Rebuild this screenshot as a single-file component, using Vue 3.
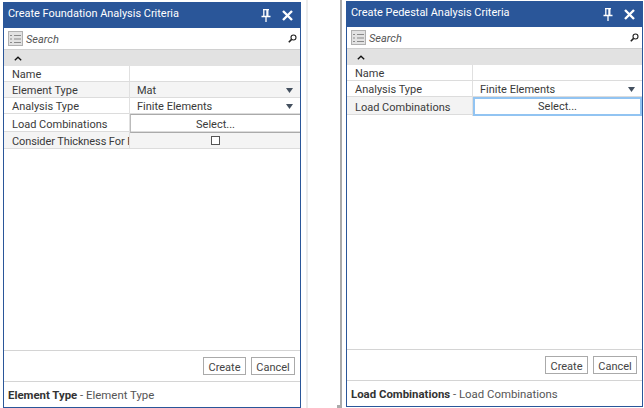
<script setup>
const panels = [
  {
    id: 'left',
    title: 'Create Foundation Analysis Criteria',
    rows: [
      { label: 'Name', type: 'text', value: '' },
      { label: 'Element Type', type: 'combo', value: 'Mat', alt: true },
      { label: 'Analysis Type', type: 'combo', value: 'Finite Elements' },
      { label: 'Load Combinations', type: 'button', value: 'Select...' },
      { label: 'Consider Thickness For Rigidity', type: 'check', value: '', alt: true }
    ],
    hint: 'Element Type'
  },
  {
    id: 'right',
    title: 'Create Pedestal Analysis Criteria',
    rows: [
      { label: 'Name', type: 'text', value: '' },
      { label: 'Analysis Type', type: 'combo', value: 'Finite Elements' },
      { label: 'Load Combinations', type: 'button', value: 'Select...', focus: true }
    ],
    hint: 'Load Combinations'
  }
]
</script>

<template>
  <div class="desk">
    <i class="strip-light"></i>
    <i class="strip-dark"></i>
    <i class="strip-foot"></i>
    <section v-for="p in panels" :key="p.id" class="panel" :class="p.id">
      <header class="title">
        <span class="title-text">{{ p.title }}</span>
        <svg class="pin" width="10" height="13" viewBox="0 0 10 13">
          <path d="M2 .7h6M2.8 1v6M6.8 1v6M.5 7.5h9M5 8v5" fill="none" stroke="#fff" stroke-width="1.3" />
          <path d="M6 1v6" stroke="#fff" stroke-width="1.4" />
        </svg>
        <svg class="close" width="11" height="11" viewBox="0 0 11 11">
          <path d="M1 1l9 9M10 1l-9 9" stroke="#fff" stroke-width="2.4" fill="none" />
        </svg>
      </header>
      <div class="search">
        <span class="list-btn">
          <svg width="11" height="10" viewBox="0 0 11 10">
            <path d="M0 1.5h2M4 1.5h7M0 5h2M4 5h7M0 8.5h2M4 8.5h7" stroke="#8a8a8a" stroke-width="1.1" fill="none" />
          </svg>
        </span>
        <span class="search-text">Search</span>
        <svg class="glass" width="9" height="9" viewBox="0 0 9 9">
          <circle cx="5.5" cy="3.5" r="2.5" fill="none" stroke="#222" stroke-width="1.1" />
          <path d="M3.6 5.4L.8 8.2" stroke="#222" stroke-width="1.6" />
        </svg>
      </div>
      <div class="group">
        <svg width="8" height="5" viewBox="0 0 8 5"><path d="M.8 4.2L4 1.2l3.2 3" fill="none" stroke="#111" stroke-width="1.3" /></svg>
      </div>
      <div class="grid">
        <div v-for="r in p.rows" :key="r.label" class="row" :class="[r.type, { alt: r.alt, focus: r.focus }]">
          <span class="label">{{ r.label }}</span>
          <span class="value">
            <template v-if="r.type === 'combo'">
              <span class="combo-text">{{ r.value }}</span>
              <svg class="arrow" width="7" height="5" viewBox="0 0 7 5"><path d="M0 0h7L3.5 5z" fill="#44505f" /></svg>
            </template>
            <template v-else-if="r.type === 'button'"><span class="select">{{ r.value }}</span></template>
            <span v-else-if="r.type === 'check'" class="box"></span>
          </span>
        </div>
      </div>
      <div class="actions">
        <button class="btn create">Create</button>
        <button class="btn cancel">Cancel</button>
      </div>
      <footer class="hint"><b>{{ p.hint }}</b> - {{ p.hint }}</footer>
    </section>
  </div>
</template>

<style scoped>
.desk {
  position: relative;
  width: 644px;
  height: 408px;
  overflow: hidden;
  background: #fff;
  font-family: Roboto, "Noto Sans", sans-serif;
  font-size: 11px;
  color: #3a3a3a;
}
.strip-light { position: absolute; left: 306px; top: 0; width: 2px; height: 408px; background: #ececec; }
.strip-dark { position: absolute; left: 340px; top: 0; width: 2px; height: 408px; background: #ababab; }
.strip-foot { position: absolute; left: 337px; top: 405px; width: 5px; height: 3px; background: #ababab; }
.panel {
  position: absolute;
  display: flex;
  flex-direction: column;
  box-sizing: border-box;
  height: 406px;
  border: 1px solid #2a5699;
  background: #fff;
}
.left { left: 3px; top: 2px; width: 298px; }
.right { left: 346px; top: 1px; width: 297px; }
.title {
  display: flex;
  align-items: center;
  height: 25px;
  background: #2a5699;
  color: #fff;
  padding: 0 7px 0 4px;
  flex: none;
}
.title-text { flex: 1; font-size: 10.95px; align-self: flex-start; line-height: 22px; }
.pin { margin-right: 11px; }
.search {
  display: flex;
  align-items: center;
  height: 22px;
  padding: 0 3px 0 4px;
  border-bottom: 1px solid #d0d0d0;
  flex: none;
  box-sizing: border-box;
}
.list-btn {
  display: flex;
  align-items: center;
  justify-content: center;
  width: 13px;
  height: 13px;
  border: 1px solid #b0b0b0;
  background: #e2e2e2;
  margin-right: 3px;
}
.search-text { flex: 1; font-style: italic; color: #555; font-size: 11px; padding-top: 2px; }
.group {
  height: 16px;
  background: #e2e2e2;
  flex: none;
  padding-left: 10px;
  display: flex;
  align-items: center;
}
.grid { flex: 1; }
.row {
  display: grid;
  grid-template-columns: 126px 1fr;
  height: 16px;
  border-bottom: 1px solid #dcdcdc;
  box-sizing: border-box;
}
.row.alt { background: #f4f4f4; }
.row.button { height: 18px; }
.row.check { height: 17px; }
.label {
  padding-left: 8px;
  white-space: nowrap;
  overflow: hidden;
  line-height: 17px;
  border-right: 1px solid #e0e0e0;
}
.row.button .label { line-height: 21px; }
.row.check .label { line-height: 20px; letter-spacing: -0.1px; }
.value {
  display: flex;
  align-items: center;
  padding: 1px 7px 0;
  line-height: 15px;
  min-width: 0;
}
.combo-text { flex: 1; }
.row.button .value {
  justify-content: center;
  border: 1px solid #aaa;
  border-left-color: #bbb;
  border-right: none;
  padding: 0;
}
.select { padding-top: 2px; }
.row.focus .select { padding-top: 0; }
.row.check .value { justify-content: center; padding-top: 0; }
.box {
  box-sizing: border-box;
  width: 9px;
  height: 9px;
  border: 1px solid #555;
  background: #fff;
}
.row.focus { background: #f3f3f3; }
.row.focus .value {
  background: #fff;
  border: 2px solid #92c4f2;
  box-sizing: border-box;
}
.actions {
  display: flex;
  justify-content: flex-end;
  gap: 5px;
  height: 31px;
  padding: 6px 5px 0 0;
  border-top: 1px solid #d4d4d4;
  box-sizing: border-box;
  flex: none;
}
.btn {
  height: 18px;
  padding: 3px 0 0;
  border: 1px solid #aaa;
  background: #fff;
  color: #444;
  font: inherit;
  line-height: 14px;
}
.create { width: 43px; }
.cancel { width: 44px; }
.hint {
  height: 26px;
  flex: none;
  border-top: 1px solid #d4d4d4;
  box-sizing: border-box;
  padding-left: 4px;
  line-height: 27px;
  font-size: 11.4px;
  color: #555;
}
.hint b { color: #333; font-weight: 700; }
</style>
